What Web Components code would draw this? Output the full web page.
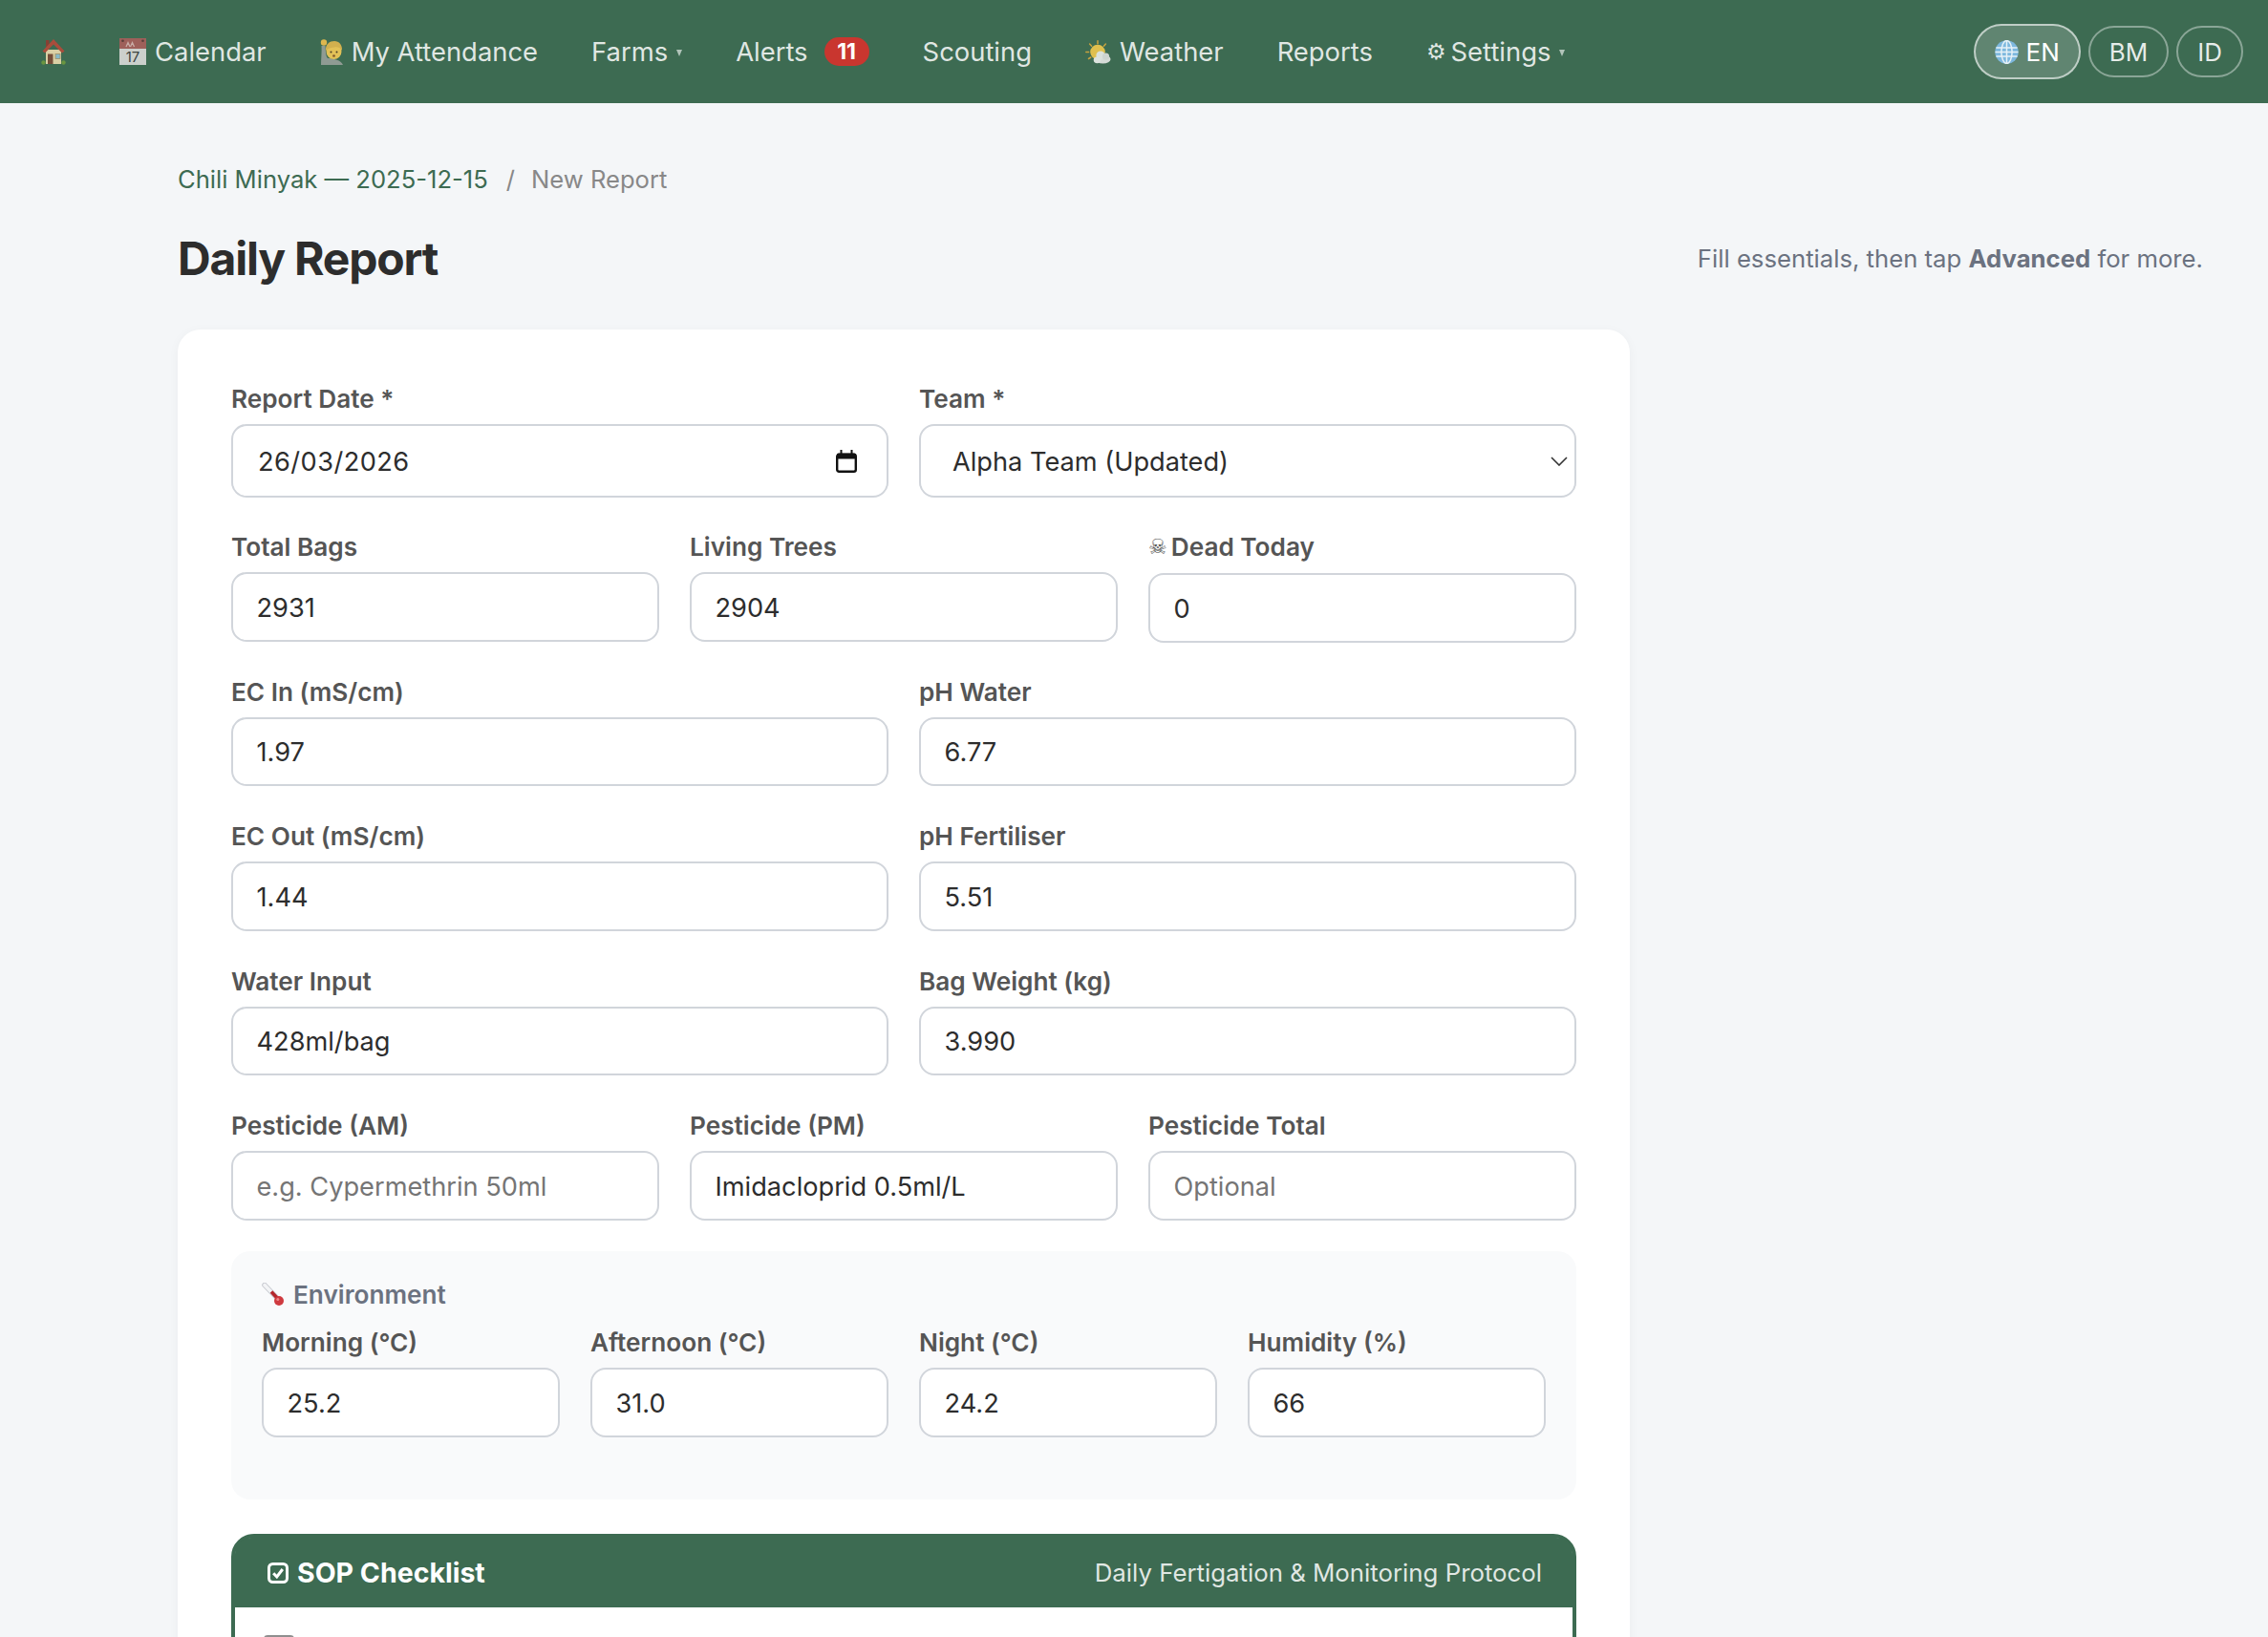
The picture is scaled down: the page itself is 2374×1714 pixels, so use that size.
<!DOCTYPE html>
<html lang="en">
<head>
<meta charset="utf-8">
<title>Daily Report</title>
<style>
  html, body { margin: 0; height: 100%; overflow: hidden; }
  body { background: #f4f6f8; font-family: Inter, "Liberation Sans", sans-serif; color: #2d2d2d; }
</style>
</head>
<body>
<app-nav>
  <nav-link><app-icon name="house"></app-icon></nav-link>
  <nav-link><app-icon name="calendar"></app-icon>Calendar</nav-link>
  <nav-link><app-icon name="person"></app-icon>My Attendance</nav-link>
  <nav-link caret>Farms</nav-link>
  <nav-link badge="11">Alerts</nav-link>
  <nav-link>Scouting</nav-link>
  <nav-link><app-icon name="weather"></app-icon>Weather</nav-link>
  <nav-link>Reports</nav-link>
  <nav-link caret gear>Settings</nav-link>
  <lang-pill slot="lang" active><app-icon name="globe"></app-icon>EN</lang-pill>
  <lang-pill slot="lang">BM</lang-pill>
  <lang-pill slot="lang">ID</lang-pill>
</app-nav>

<main-page>
  <page-head crumb="Chili Minyak — 2025-12-15" current="New Report" heading="Daily Report">
    Fill essentials, then tap <b>Advanced</b> for more.
  </page-head>
  <report-card>
    <form-row cols="2" class="first">
      <form-field label="Report Date *" value="26/03/2026" type="date"></form-field>
      <form-field label="Team *" value="Alpha Team (Updated)" type="select"></form-field>
    </form-row>
    <form-row cols="3">
      <form-field label="Total Bags" value="2931"></form-field>
      <form-field label="Living Trees" value="2904"></form-field>
      <form-field label="Dead Today" value="0" skull></form-field>
    </form-row>
    <form-row cols="2">
      <form-field label="EC In (mS/cm)" value="1.97"></form-field>
      <form-field label="pH Water" value="6.77"></form-field>
    </form-row>
    <form-row cols="2">
      <form-field label="EC Out (mS/cm)" value="1.44"></form-field>
      <form-field label="pH Fertiliser" value="5.51"></form-field>
    </form-row>
    <form-row cols="2">
      <form-field label="Water Input" value="428ml/bag"></form-field>
      <form-field label="Bag Weight (kg)" value="3.990"></form-field>
    </form-row>
    <form-row cols="3">
      <form-field label="Pesticide (AM)" placeholder="e.g. Cypermethrin 50ml"></form-field>
      <form-field label="Pesticide (PM)" value="Imidacloprid 0.5ml/L"></form-field>
      <form-field label="Pesticide Total" placeholder="Optional"></form-field>
    </form-row>
    <env-panel heading="Environment">
      <form-row cols="4">
        <form-field label="Morning (°C)" value="25.2"></form-field>
        <form-field label="Afternoon (°C)" value="31.0"></form-field>
        <form-field label="Night (°C)" value="24.2"></form-field>
        <form-field label="Humidity (%)" value="66"></form-field>
      </form-row>
    </env-panel>
    <sop-panel heading="SOP Checklist" note="Daily Fertigation &amp; Monitoring Protocol"></sop-panel>
  </report-card>
</main-page>

<script>
// emoji have no installed colour font here, so they are small svg drawings
const ICONS = {
  house: `<svg width="26" height="28" viewBox="0 0 26 28"><circle cx="2.5" cy="25.5" r="2.2" fill="#6f9a3f"/><circle cx="23.5" cy="25.5" r="2.2" fill="#6f9a3f"/><rect x="5" y="12" width="16" height="15" fill="#ecdcae"/><rect x="5" y="2" width="3.5" height="7" fill="#8f3c30"/><path d="M13 1 1.5 13.5 4 15.5 13 6.5 22 15.5 24.5 13.5Z" fill="#b54a3a"/><rect x="7" y="16.5" width="5.5" height="10.5" fill="#7d4b37"/><rect x="15" y="16.5" width="5" height="5" fill="#8ec3d6" stroke="#a9946b" stroke-width=".8"/></svg>`,
  calendar: `<svg width="28" height="28" viewBox="0 0 28 28"><rect width="28" height="28" fill="#dcdcda"/><rect width="28" height="11" fill="#a95f5b"/><circle cx="3.5" cy="2.8" r="1.3" fill="#5e3a38"/><circle cx="24.5" cy="2.8" r="1.3" fill="#5e3a38"/><path d="M7 9 9 4.5 11 9M11.5 9 13.5 4.5 15.5 9" fill="none" stroke="#d9b4b0" stroke-width="1.3"/><text x="14" y="25.4" text-anchor="middle" font-family="Inter, sans-serif" font-size="15" fill="#3f3f3f">17</text></svg>`,
  person: `<svg width="24" height="28" viewBox="0 0 24 28"><path d="M1 28C1 22 2 14 1.5 8L5.5 8C6 14 6 19 8 21 14 21 22 23 24 28Z" fill="#98a19b"/><circle cx="4" cy="4.5" r="3.2" fill="#f0c04e"/><circle cx="14.5" cy="14" r="8" fill="#f4cb58"/><path d="M6 13C5.5 6 10 3 15 3 20 3 23.5 7 23 13 21 9.5 18 9 15 9.5 12 10 9 10 6 13Z" fill="#e3b84e"/><circle cx="11.5" cy="14.5" r="1" fill="#4c3a22"/><circle cx="17.5" cy="14.5" r="1" fill="#4c3a22"/><ellipse cx="14.5" cy="18.5" rx="1.4" ry="1.2" fill="#8a5a2a"/></svg>`,
  weather: `<svg width="27" height="25" viewBox="0 0 27 25"><g stroke="#d7a93c" stroke-width="1.5" stroke-linecap="round"><path d="M13 .8V3.8M4.6 4 6.6 6.2M21.4 4 19.4 6.2M.8 12.5H3.6M3.5 19.5 5.8 18"/></g><circle cx="13" cy="12.5" r="7.8" fill="#f2ca4e"/><ellipse cx="18.5" cy="20" rx="8" ry="4.5" fill="#e6e8e6"/><circle cx="16" cy="16" r="4.6" fill="#eceeec"/><circle cx="21.5" cy="17.2" r="3.6" fill="#dde0de"/><ellipse cx="12.5" cy="20.8" rx="3.8" ry="3.4" fill="#eef0ee"/></svg>`,
  globe: `<svg width="25" height="25" viewBox="0 0 25 25"><circle cx="12.5" cy="12.5" r="12.2" fill="#7db8de"/><g fill="none" stroke="#e6f1f7" stroke-width="1.5"><ellipse cx="12.5" cy="12.5" rx="5.6" ry="12"/><path d="M12.5.5V24.5M1.4 8H23.6M.5 12.5H24.5M1.4 17H23.6"/></g></svg>`,
  thermometer: `<svg width="24" height="25" viewBox="0 0 24 25"><path d="M3 2.5 15 15" stroke="#c4c6cc" stroke-width="5.4" stroke-linecap="round"/><path d="M3 2.5 15 15" stroke="#f3f4f6" stroke-width="3.6" stroke-linecap="round"/><path d="M10 9.5 17 17" stroke="#b3262b" stroke-width="3.6"/><circle cx="18" cy="19" r="5" fill="#cf3a3f"/><circle cx="16.8" cy="17.6" r="1.5" fill="#e88"/></svg>`
};

class AppIcon extends HTMLElement {
  connectedCallback() {
    const shadow = this.attachShadow({ mode: 'open' });
    shadow.innerHTML = `<style>:host{display:inline-flex;flex:none}svg{display:block}</style>${ICONS[this.getAttribute('name')]}`;
  }
}

class AppNav extends HTMLElement {
  constructor() {
    super();
    this.attachShadow({ mode: 'open' }).innerHTML = `
      <style>
        :host { display: flex; align-items: center; height: 108px; padding: 0 26px 0 15px; background: #3d6b52; box-sizing: border-box; }
        .links { display: flex; align-items: center; flex: 1; }
        .langs { display: flex; align-items: center; gap: 8px; }
      </style>
      <div class="links"><slot></slot></div>
      <div class="langs"><slot name="lang"></slot></div>`;
  }
}

class NavLink extends HTMLElement {
  connectedCallback() {
    const badge = this.getAttribute('badge');
    const gear = this.hasAttribute('gear') ? '<span class="gear">⚙</span>' : '';
    const after = (badge ? `<span class="badge">${badge}</span>` : '') + (this.hasAttribute('caret') ? '<span class="caret"></span>' : '');
    this.attachShadow({ mode: 'open' }).innerHTML = `
      <style>
        :host { display: flex; align-items: center; padding: 0 28px; font-size: 27.4px; color: rgba(255,255,255,.85); white-space: nowrap; }
        ::slotted(app-icon) { margin-right: 9px; opacity: .9; }
        ::slotted(app-icon[name="house"]) { margin-right: 0; }
        .caret { width: 0; height: 0; margin: 3px 0 0 9px; border: 3.5px solid transparent; border-top: 7px solid rgba(255,255,255,.6); border-bottom: 0; }
        .badge { margin-left: 17px; height: 30px; width: 47px; border-radius: 15px; background: #c9362f; color: #fff; font-size: 23px; font-weight: 700; display: flex; align-items: center; justify-content: center; }
        .gear { font-family: "DejaVu Sans", sans-serif; font-size: 23px; margin-right: 5px; }
      </style>
      ${gear}<slot></slot>${after}`;
  }
}

class LangPill extends HTMLElement {
  constructor() {
    super();
    this.attachShadow({ mode: 'open' }).innerHTML = `
      <style>
        :host { display: flex; align-items: center; box-sizing: border-box; height: 54px; padding: 0 20px; border: 2px solid rgba(255,255,255,.4); border-radius: 27px; font-size: 26px; color: rgba(255,255,255,.88); }
        :host([active]) { height: 58px; border-radius: 29px; padding: 0 20px; border-color: rgba(255,255,255,.6); background: rgba(255,255,255,.18); color: #fff; }
        ::slotted(app-icon) { margin-right: 8px; }
      </style>
      <slot></slot>`;
  }
}

class MainPage extends HTMLElement {
  constructor() {
    super();
    this.attachShadow({ mode: 'open' }).innerHTML = `
      <style>:host { display: block; padding: 61.5px 68px 0 186px; }</style>
      <slot></slot>`;
  }
}

class PageHead extends HTMLElement {
  connectedCallback() {
    const shadow = this.attachShadow({ mode: 'open' });
    shadow.innerHTML = `
      <style>
        :host { display: block; margin-bottom: 46px; }
        .crumbs { display: flex; align-items: center; height: 36px; font-size: 25.6px; color: #888; margin-bottom: 35.5px; }
        .crumbs a { color: #3d6b52; }
        .crumbs i { font-style: normal; margin: 0 17px 0 19px; }
        .row { display: flex; align-items: center; justify-content: space-between; height: 58px; }
        h1 { margin: 0; font-size: 48px; font-weight: 700; color: #2d2d2d; letter-spacing: -1.2px; }
        p { margin: 0; font-size: 25.7px; color: #6b7280; }
        ::slotted(b) { font-weight: 700; }
      </style>
      <div class="crumbs"><a>${this.getAttribute('crumb')}</a><i>/</i><span>${this.getAttribute('current')}</span></div>
      <div class="row"><h1>${this.getAttribute('heading')}</h1><p><slot></slot></p></div>`;
  }
}

class ReportCard extends HTMLElement {
  constructor() {
    super();
    this.attachShadow({ mode: 'open' }).innerHTML = `
      <style>
        :host { display: block; box-sizing: border-box; width: 1520px; height: 1600px; padding: 52px 56px 0; background: #fff; border-radius: 24px; box-shadow: 0 2px 12px rgba(0,0,0,.04); }
      </style>
      <slot></slot>`;
  }
}

class FormRow extends HTMLElement {
  constructor() {
    super();
    this.attachShadow({ mode: 'open' }).innerHTML = `
      <style>
        :host { display: grid; gap: 32px; margin-bottom: 32px; align-items: start; }
        :host(.first) { margin-bottom: 31px; }
        :host([cols="2"]) { grid-template-columns: repeat(2, minmax(0, 1fr)); }
        :host([cols="3"]) { grid-template-columns: repeat(3, minmax(0, 1fr)); }
        :host([cols="4"]) { grid-template-columns: repeat(4, minmax(0, 1fr)); }
      </style>
      <slot></slot>`;
  }
}

class FormField extends HTMLElement {
  connectedCallback() {
    const type = this.getAttribute('type');
    const value = this.getAttribute('value');
    const hint = this.getAttribute('placeholder');
    const skull = this.hasAttribute('skull') ? '<span class="skull">☠</span>' : '';
    const tail = type === 'date'
      ? `<svg width="22" height="24" viewBox="0 0 22 24"><rect x="1.2" y="5" width="19.6" height="17.8" rx="2" fill="none" stroke="#111" stroke-width="2.4"/><rect x="1" y="3.5" width="20" height="6" rx="1.5" fill="#111"/><rect x="4.5" y="0" width="2" height="4" fill="#111"/><rect x="15.5" y="0" width="2" height="4" fill="#111"/></svg>`
      : type === 'select'
        ? `<svg width="18" height="10" viewBox="0 0 18 10"><path d="M1 1 9 9 17 1" fill="none" stroke="#333" stroke-width="1.6"/></svg>`
        : '';
    this.attachShadow({ mode: 'open' }).innerHTML = `
      <style>
        :host { display: block; }
        .label { display: flex; align-items: center; box-sizing: border-box; height: 39px; padding-top: 2px; margin-bottom: 8px; font-size: 26.2px; font-weight: 600; color: #555; white-space: nowrap; }
        .skull { font-family: "DejaVu Sans", sans-serif; font-size: 22px; font-weight: 400; margin-right: 4px; }
        :host([skull]) .label { height: 40px; padding-top: 0; }
        :host([skull]) .box { margin-bottom: -1px; }
        .box { display: flex; align-items: center; justify-content: space-between; box-sizing: border-box; height: 72.5px; padding: 2px 24px 0 24.5px; border: 2px solid #d1d5db; border-radius: 16px; background: #fff; font-size: 27.2px; color: #2d2d2d; }
        .box svg { margin-top: -2px; }
        .hint { color: #757575; }
        :host([type="date"]) .box { height: 77px; padding: 2px 31px 0 26px; letter-spacing: .45px; }
        :host([type="select"]) .box { height: 77px; padding: 2px 7px 0 33px; }
      </style>
      <div class="label">${skull}${this.getAttribute('label')}</div>
      <div class="box" role="textbox"><span class="${value === null ? 'hint' : ''}">${value === null ? hint : value}</span>${tail}</div>`;
  }
}

class EnvPanel extends HTMLElement {
  connectedCallback() {
    this.attachShadow({ mode: 'open' }).innerHTML = `
      <style>
        :host { display: block; margin: 5.5px 0 36px; padding: 26.5px 32px 32px; height: 260px; box-sizing: border-box; background: #f9fafb; border-radius: 20px; }
        .head { display: flex; align-items: center; gap: 9px; height: 39px; margin-bottom: 10px; font-size: 26.2px; font-weight: 600; color: #6b7280; }
      </style>
      <div class="head"><app-icon name="thermometer"></app-icon>${this.getAttribute('heading')}</div>
      <slot></slot>`;
  }
}

class SopPanel extends HTMLElement {
  connectedCallback() {
    this.attachShadow({ mode: 'open' }).innerHTML = `
      <style>
        :host { display: block; border: 4px solid #3d6b52; border-radius: 24px; background: #fff; }
        header { display: flex; align-items: center; justify-content: space-between; box-sizing: border-box; height: 73px; padding: 1.5px 32px 0 34px; background: #3d6b52; border-radius: 17px 17px 0 0; color: #fff; }
        .title { display: flex; align-items: center; gap: 9px; font-size: 28.5px; font-weight: 700; }
        .note { font-size: 25.8px; color: rgba(255,255,255,.85); }
        .body { padding: 29px 30px; }
        .check { width: 32px; height: 32px; box-sizing: border-box; border: 2px solid #8f8f8f; border-radius: 4px; background: #fff; }
      </style>
      <header>
        <span class="title"><svg width="22" height="22" viewBox="0 0 22 22"><rect x="1.5" y="1.5" width="19" height="19" rx="4" fill="none" stroke="#fff" stroke-width="3"/><path d="M6.2 11.2 9.8 15 15.8 7" fill="none" stroke="#fff" stroke-width="3"/></svg>${this.getAttribute('heading')}</span>
        <span class="note">${this.getAttribute('note').replace('&', '&amp;')}</span>
      </header>
      <div class="body"><div class="check"></div></div>`;
  }
}

customElements.define('app-icon', AppIcon);
customElements.define('app-nav', AppNav);
customElements.define('nav-link', NavLink);
customElements.define('lang-pill', LangPill);
customElements.define('main-page', MainPage);
customElements.define('page-head', PageHead);
customElements.define('report-card', ReportCard);
customElements.define('form-row', FormRow);
customElements.define('form-field', FormField);
customElements.define('env-panel', EnvPanel);
customElements.define('sop-panel', SopPanel);
</script>
</body>
</html>
